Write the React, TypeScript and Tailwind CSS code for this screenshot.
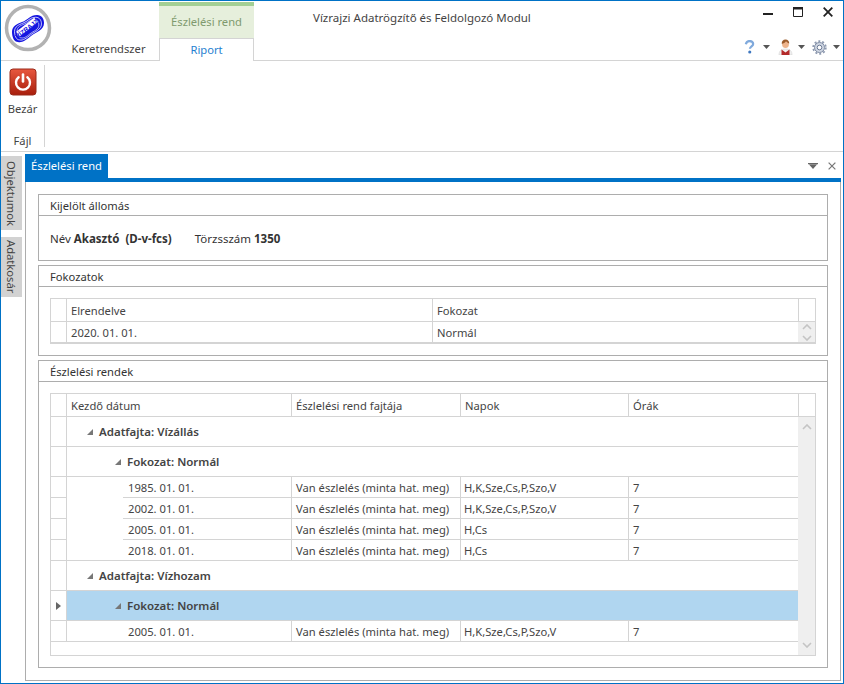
import React from 'react';

const line = 'border-[#d4d4d4]';

function Logo() {
  const bean = 'M8 28C8 22 13 20 18 18C24 16 26 11 33 11C38 11 40 15 40 19C40 26 32 28 27 32C22 36 18 39 14 38C10 38 8 33 8 28Z';
  return (
    <svg width="48" height="48" viewBox="0 0 48 48">
      <circle cx="24" cy="24" r="21.500" fill="#fff" stroke="#b2b2b2" strokeWidth="3.500" />
      <path d={bean} fill="#1414e0" />
      <g fill="none" stroke="#fff" strokeWidth="0.900">
        <path d={bean} transform="translate(24 25) scale(.84) translate(-24 -25)" />
        <path d={bean} transform="translate(24 25) scale(.68) translate(-24 -25)" />
      </g>
      <path d="M14 30L32 16" stroke="#fff" strokeWidth="6" />
      <text x="23" y="27" fontSize="6.500" fontWeight="700" fill="#1414e0" textAnchor="middle" transform="rotate(-38 23 25)" fontFamily="Liberation Sans, sans-serif">VÍZRAJZ</text>
    </svg>
  );
}

function PowerButton() {
  return (
    <svg width="28" height="28" viewBox="0 0 28 28">
      <defs>
        <linearGradient id="pw" x1="0" y1="0" x2="0" y2="1">
          <stop offset="0" stopColor="#e8583f" />
          <stop offset="1" stopColor="#a81e0c" />
        </linearGradient>
      </defs>
      <rect x="1" y="1" width="26" height="26" rx="3" fill="url(#pw)" stroke="#9a2a1a" />
      <path d="M9.600 9.200a7 7 0 1 0 8.800 0" fill="none" stroke="#fff" strokeWidth="2.400" strokeLinecap="round" />
      <path d="M14 6.500v7" fill="none" stroke="#fff" strokeWidth="2.600" strokeLinecap="round" />
    </svg>
  );
}

function Caret() {
  return (
    <svg width="7" height="4" viewBox="0 0 7 4">
      <path d="M0 0h7L3.500 4z" fill="#555" />
    </svg>
  );
}

function HelpIcon() {
  return (
    <svg width="11" height="14" viewBox="0 0 12 15">
      <path d="M2 4.500C2.500 2 4 1 6 1c2.500 0 4 1.300 4 3.200 0 2.500-3.500 2.800-3.500 5.300" fill="none" stroke="#7fa9dc" strokeWidth="2.400" />
      <circle cx="6.300" cy="13" r="1.700" fill="#3f78c0" />
    </svg>
  );
}

function UserIcon() {
  return (
    <svg width="15" height="16" viewBox="0 0 15 16">
      <path d="M1 16c0-4 2-6 6.500-6s6.500 2 6.500 6z" fill="#f0f0f0" stroke="#ccc" strokeWidth="0.500" />
      <path d="M3.500 16v-5.500l4 3 4-3V16z" fill="#b32a2a" />
      <circle cx="7.500" cy="5.500" r="3.400" fill="#eeb48c" />
      <path d="M3.800 5c-.4-3 1.400-4.600 3.700-4.600s4 1.600 3.700 4.200c-1-.4-2.500-1.400-3.200-2.300-.8 1.300-2.600 2.300-4.200 2.700z" fill="#9a5a2a" />
    </svg>
  );
}

function GearIcon() {
  return (
    <svg width="15" height="15" viewBox="0 0 15 15">
      <circle cx="7.500" cy="7.500" r="5" fill="#cfd6e2" stroke="#7e8ba3" strokeWidth="1" />
      <circle cx="7.500" cy="7.500" r="6.300" fill="none" stroke="#8e9ab0" strokeWidth="1.800" strokeDasharray="2 1.960" />
      <circle cx="7.500" cy="7.500" r="2.300" fill="#fff" stroke="#6d7b96" strokeWidth="1" />
    </svg>
  );
}

function Expander() {
  return (
    <svg width="6" height="6" viewBox="0 0 6 6" className="shrink-0">
      <path d="M0 6h6V0z" fill="#777" />
    </svg>
  );
}

function Chevron({ down }: { down?: boolean }) {
  return (
    <svg width="10" height="6" viewBox="0 0 10 6">
      <path d={down ? 'M1 1l4 4 4-4' : 'M1 5l4-4 4 4'} fill="none" stroke="#c4c4c4" strokeWidth="1.600" />
    </svg>
  );
}

function GroupBox({ title, height, children }: { title: string; height: string; children: React.ReactNode }) {
  return (
    <div className={`border border-[#adadad] flex flex-col ${height}`}>
      <div className="h-[21px] shrink-0 border-b border-[#adadad] pl-[11px] pt-[1px] flex items-center text-[#333]">{title}</div>
      {children}
    </div>
  );
}

function Indicator({ selected }: { selected?: boolean }) {
  return (
    <div className={`w-[16px] shrink-0 border-r border-b ${line} flex items-center justify-center`}>
      {selected && (
        <svg width="5" height="8" viewBox="0 0 5 8">
          <path d="M0 0l5 4-5 4z" fill="#666" />
        </svg>
      )}
    </div>
  );
}

function GroupRow({ label, level, selected }: { label: string; level: 1 | 2; selected?: boolean }) {
  return (
    <div className="flex h-[30px]">
      <Indicator selected={selected} />
      <div
        className={`flex-1 flex items-center gap-[6px] border-b ${line} font-semibold text-[11.500px] text-[#444] ${
          level === 1 ? 'pl-[20px]' : 'pl-[48px]'
        } ${selected ? 'bg-[#b0d6f0]' : ''}`}
      >
        <Expander />
        <span>{label}</span>
      </div>
    </div>
  );
}

function DataRow({ date, days, full }: { date: string; days: string; full?: boolean }) {
  return (
    <div className="flex h-[21px] text-[#444]">
      <Indicator />
      <div className={`w-[56px] shrink-0 ${full ? `border-b ${line}` : ''}`} />
      <div className={`w-[169px] shrink-0 border-r border-b ${line} pl-[5px] pt-[1px] flex items-center`}>{date}</div>
      <div className={`w-[169px] shrink-0 border-r border-b ${line} pl-[4px] pt-[1px] flex items-center`}>Van észlelés (minta hat. meg)</div>
      <div className={`w-[168px] shrink-0 border-r border-b ${line} pl-[3px] pt-[1px] flex items-center`}>{days}</div>
      <div className={`flex-1 border-b ${line} pl-[4px] pt-[1px] flex items-center`}>7</div>
    </div>
  );
}

const rows1 = [
  { date: '1985. 01. 01.', days: 'H,K,Sze,Cs,P,Szo,V' },
  { date: '2002. 01. 01.', days: 'H,K,Sze,Cs,P,Szo,V' },
  { date: '2005. 01. 01.', days: 'H,Cs' },
  { date: '2018. 01. 01.', days: 'H,Cs' },
];

export default function App() {
  return (
    <div className="w-[844px] h-[684px] border border-[#0072c6] bg-white flex flex-col overflow-hidden font-['Noto_Sans',sans-serif] text-[11.200px] leading-none text-[#444]">
      {/* title bar + ribbon tabs */}
      <div className="h-[60px] shrink-0 border-b border-[#d4d4d4] flex">
        <div className="w-[57px] shrink-0 pl-[3px] pt-[3px]">
          <Logo />
        </div>
        <div className="w-[101px] shrink-0 self-end h-[22px] flex items-center justify-center text-[#444]">Keretrendszer</div>
        <div className="w-[95px] shrink-0 flex flex-col pt-[1px]">
          <div className="h-[36px] bg-[#e6efdc] border-t-4 border-[#a3cf94] flex items-center justify-center text-[#7f9a6e]">Észlelési rend</div>
          <div className="h-[23px] -mb-px bg-white border-x border-t border-[#d4d4d4] flex items-center justify-center text-[#1f7fd0]">Riport</div>
        </div>
        <div className="flex-1 pl-[59px] pt-[11px] text-[11.500px] text-[#444]">Vízrajzi Adatrögzítő és Feldolgozó Modul</div>
        <div className="w-[110px] shrink-0 flex flex-col items-end">
          <div className="flex items-center gap-[20px] pt-[6px] pr-[10px]">
            <svg width="10" height="10" viewBox="0 0 10 10"><path d="M0 6h10v2H0z" fill="#222" /></svg>
            <svg width="10" height="10" viewBox="0 0 10 10"><path d="M.5 1h9v8.500h-9z" fill="none" stroke="#222" /><path d="M0 0h10v2.500H0z" fill="#222" /></svg>
            <svg width="10" height="10" viewBox="0 0 10 10"><path d="M.7.7l8.600 8.600M9.300.7L.7 9.300" stroke="#222" strokeWidth="1.800" /></svg>
          </div>
          <div className="flex items-center mt-[22px] pr-[3px]">
            <HelpIcon />
            <span className="ml-[8px]"><Caret /></span>
            <span className="ml-[8px]"><UserIcon /></span>
            <span className="ml-[5px]"><Caret /></span>
            <span className="ml-[7px]"><GearIcon /></span>
            <span className="ml-[6px]"><Caret /></span>
          </div>
        </div>
      </div>

      {/* ribbon */}
      <div className="h-[91px] shrink-0 border-b border-[#d4d4d4] py-[4px] flex">
        <div className="w-[44px] border-r border-[#d4d4d4] flex flex-col items-center">
          <div className="mt-[3px]"><PowerButton /></div>
          <div className="mt-[7px] text-[#444]">Bezár</div>
          <div className="mt-auto mb-[1px] text-[#444]">Fájl</div>
        </div>
      </div>

      {/* dock */}
      <div className="flex-1 flex min-h-0 pb-[2px] pr-[2px]">
        <div className="w-[24px] shrink-0 pt-[4px] flex flex-col gap-[7px]">
          <div className="w-[21px] h-[74px] bg-[#d2d2d2] flex items-center justify-center [writing-mode:vertical-rl] text-[#444]">Objektumok</div>
          <div className="w-[21px] h-[60px] bg-[#d2d2d2] flex items-center justify-center [writing-mode:vertical-rl] text-[#444]">Adatkosár</div>
        </div>
        <div className="flex-1 flex flex-col">
          <div className="h-[26px] shrink-0 pt-[2px] flex items-center justify-between pr-[5px]">
            <div className="w-[83px] h-[24px] bg-[#0072c6] text-white flex items-center justify-center">Észlelési rend</div>
            <div className="flex items-center gap-[10px]">
              <svg width="10" height="6" viewBox="0 0 10 6"><path d="M0 0h10v1.200H0zM1 1.500h8L5 6z" fill="#666" /></svg>
              <svg width="8" height="8" viewBox="0 0 9 9"><path d="M.7.7l7.600 7.600M8.300.7L.7 8.300" stroke="#777" strokeWidth="1.400" /></svg>
            </div>
          </div>
          <div className="h-[4px] shrink-0 bg-[#0072c6]" />
          <div className="flex-1 border-x border-b border-[#adadad] px-[12px] pt-[12px] flex flex-col gap-[4px]">
            <GroupBox title="Kijelölt állomás" height="h-[67px]">
              <div className="flex-1 flex items-center pl-[11px] pt-[2px] text-[11.500px] text-[#333]">
                <span>Név <b className="font-bold">Akasztó&nbsp; (D-v-fcs)</b></span>
                <span className="ml-[23px]">Törzsszám <b className="font-bold">1350</b></span>
              </div>
            </GroupBox>
            <GroupBox title="Fokozatok" height="h-[91px]">
              <div className="px-[11px] pt-[11px]">
                <div className={`border ${line} border-b-2 flex h-[46px]`}>
                  <div className="flex-1 flex flex-col">
                    <div className="flex h-[23px]">
                      <div className={`w-[16px] shrink-0 border-r border-b ${line}`} />
                      <div className={`w-[366px] shrink-0 border-r border-b ${line} pl-[4px] pt-[1px] flex items-center`}>Elrendelve</div>
                      <div className={`flex-1 border-b ${line} pl-[4px] pt-[1px] flex items-center`}>Fokozat</div>
                    </div>
                    <div className="flex flex-1">
                      <div className={`w-[16px] shrink-0 border-r ${line}`} />
                      <div className={`w-[366px] shrink-0 border-r ${line} pl-[4px] pt-[1px] flex items-center`}>2020. 01. 01.</div>
                      <div className="flex-1 pl-[4px] pt-[1px] flex items-center">Normál</div>
                    </div>
                  </div>
                  <div className="w-[17px] shrink-0 flex flex-col">
                    <div className={`h-[23px] border-l border-b ${line}`} />
                    <div className="flex-1 bg-[#efefef] flex flex-col items-center justify-center gap-[5px]">
                      <Chevron />
                      <Chevron down />
                    </div>
                  </div>
                </div>
              </div>
            </GroupBox>
            <GroupBox title="Észlelési rendek" height="h-[308px]">
              <div className="px-[11px] pt-[11px]">
                <div className={`border ${line} flex h-[263px]`}>
                  <div className="flex-1 flex flex-col">
                    <div className="flex h-[23px]">
                      <div className={`w-[16px] shrink-0 border-r border-b ${line}`} />
                      <div className={`w-[225px] shrink-0 border-r border-b ${line} pl-[4px] pt-[1px] flex items-center`}>Kezdő dátum</div>
                      <div className={`w-[169px] shrink-0 border-r border-b ${line} pl-[4px] pt-[1px] flex items-center`}>Észlelési rend fajtája</div>
                      <div className={`w-[168px] shrink-0 border-r border-b ${line} pl-[4px] pt-[1px] flex items-center`}>Napok</div>
                      <div className={`flex-1 border-b ${line} pl-[4px] pt-[1px] flex items-center`}>Órák</div>
                    </div>
                    <GroupRow label="Adatfajta: Vízállás" level={1} />
                    <GroupRow label="Fokozat: Normál" level={2} />
                    {rows1.map((r, i) => (
                      <DataRow key={i} date={r.date} days={r.days} full={i === rows1.length - 1} />
                    ))}
                    <GroupRow label="Adatfajta: Vízhozam" level={1} />
                    <GroupRow label="Fokozat: Normál" level={2} selected />
                    <DataRow date="2005. 01. 01." days="H,K,Sze,Cs,P,Szo,V" full />
                  </div>
                  <div className="w-[17px] shrink-0 flex flex-col">
                    <div className={`h-[23px] border-l border-b ${line}`} />
                    <div className="flex-1 bg-[#efefef] flex flex-col items-center justify-between py-[7px]">
                      <Chevron />
                      <Chevron down />
                    </div>
                  </div>
                </div>
              </div>
            </GroupBox>
          </div>
        </div>
      </div>
    </div>
  );
}
